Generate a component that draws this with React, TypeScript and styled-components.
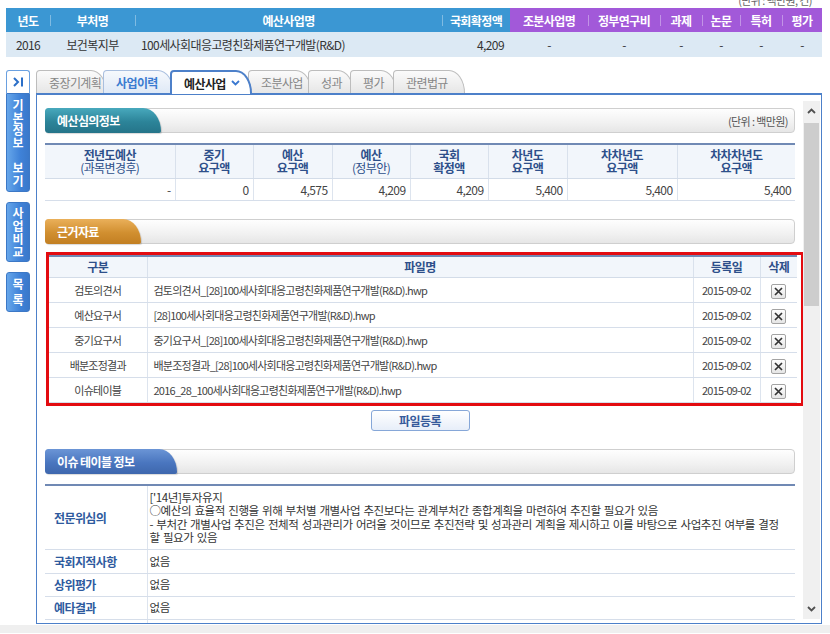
import React from 'react';
import styled, { createGlobalStyle, css } from 'styled-components';

const GlobalStyle = createGlobalStyle`
  html, body {
    margin: 0;
    padding: 0;
    background: #ffffff;
  }
  body {
    font-family: "Noto Sans CJK KR", "Noto Sans", sans-serif;
    font-size: 12px;
    color: #333;
  }
  * {
    box-sizing: border-box;
  }
  table {
    border-collapse: collapse;
    border-spacing: 0;
  }
`;

const Page = styled.div`
  width: 830px;
  height: 634px;
  overflow: hidden;
  padding: 0 8px 0 6px;
  letter-spacing: -0.6px;
`;

const UnitNote = styled.div`
  height: 8px;
  overflow: hidden;
  text-align: right;
  font-size: 11px;
  line-height: 14px;
  color: #666;
  padding-right: 10px;

  span {
    display: block;
    margin-top: -7px;
  }
`;

/* ---------- summary table ---------- */

const SummaryTable = styled.table`
  width: 816px;
  table-layout: fixed;
`;

const SumHead = styled.th<{ $purple?: boolean }>`
  position: relative;
  height: 24px;
  padding: 0;
  background: ${({ $purple }) => ($purple ? '#a259d9' : '#3b97d3')};
  color: #fff;
  font-weight: 700;
  font-size: 12px;
  text-align: center;

  & + &::before {
    content: '';
    position: absolute;
    left: 0;
    top: 7px;
    width: 1px;
    height: 11px;
    background: rgba(255, 255, 255, 0.35);
  }
`;

const SumCell = styled.td<{ $align?: string }>`
  height: 25px;
  padding: 0 6px;
  background: #dce9f4;
  color: #333;
  font-size: 12px;
  text-align: ${({ $align }) => $align || 'center'};
  white-space: nowrap;
`;

/* ---------- layout ---------- */

const Main = styled.div`
  display: flex;
  gap: 6px;
  margin-top: 13px;
`;

const Sidebar = styled.div`
  width: 24px;
  display: flex;
  flex-direction: column;
`;

const Toggle = styled.div`
  height: 23px;
  border: 1px solid #6aa0e0;
  border-bottom: none;
  border-radius: 3px 3px 0 0;
  background: #fff;
  display: flex;
  align-items: center;
  justify-content: center;
`;

const SideButton = styled.div<{ $h: number; $top?: number; $line?: number; $center?: boolean }>`
  height: ${({ $h }) => $h}px;
  margin-top: ${({ $top }) => $top ?? 0}px;
  border: 1px solid #3c78c6;
  border-radius: ${({ $top }) => ($top ? '3px' : '0 0 3px 3px')};
  background: linear-gradient(to right, #66a6ea, #3f82d8 60%, #3a78ca);
  color: #fff;
  font-weight: 700;
  font-size: 12px;
  display: flex;
  flex-direction: column;
  align-items: center;
  justify-content: ${({ $center }) => ($center ? 'center' : 'flex-start')};
  padding-top: ${({ $center }) => ($center ? 0 : 5)}px;
  line-height: ${({ $line }) => $line ?? 12.6}px;
  letter-spacing: 0;
`;

const Char = styled.span`
  display: block;
  min-height: 1em;
`;

const Content = styled.div`
  flex: 1;
  display: flex;
  flex-direction: column;
`;

const Tabs = styled.div`
  display: flex;
  align-items: flex-end;
  height: 23px;
  position: relative;
  z-index: 1;
`;

const Tab = styled.div<{ $w: number; $active?: boolean; $soft?: boolean }>`
  width: ${({ $w }) => $w}px;
  height: 23px;
  margin-right: -4px;
  border: 1px solid #bdbdbd;
  border-bottom: none;
  border-radius: 4px 16px 0 0 / 4px 23px 0 0;
  background: linear-gradient(#fbfbfb, #e6e6e6);
  color: #868686;
  font-size: 12px;
  display: flex;
  align-items: center;
  padding-left: 12px;
  gap: 5px;

  ${({ $soft }) =>
    $soft &&
    css`
      background: linear-gradient(#f6f9fd, #dfe9f6);
      border-color: #a9bfdf;
      color: #3a7bd0;
      font-weight: 700;
    `}

  ${({ $active }) =>
    $active &&
    css`
      height: 24px;
      margin-bottom: -1px;
      background: #fff;
      border: 2px solid #4d80c9;
      border-bottom: none;
      color: #222;
      font-weight: 700;
      position: relative;
      z-index: 2;
    `}
`;

const Panel = styled.div`
  height: 531px;
  border: 1px solid #4d80c9;
  border-top-width: 2px;
  display: flex;
  background: #fff;
`;

const Body = styled.div`
  flex: 1;
  overflow: hidden;
  padding: 13px 8px 0 8px;
`;

const Scrollbar = styled.div`
  width: 17px;
  margin: 6px 1px 4px 0;
  background: #f0f0f0;
  display: flex;
  flex-direction: column;
  align-items: center;
`;

const ScrollArrow = styled.div`
  height: 20px;
  display: flex;
  align-items: center;
  justify-content: center;
`;

const ScrollThumb = styled.div`
  width: 15px;
  height: 183px;
  margin-top: 2px;
  background: #cdcdcd;
`;

const ScrollTrack = styled.div`
  flex: 1;
`;

/* ---------- section header ---------- */

const tones = {
  teal: 'linear-gradient(#48a9bd, #2c8499 55%, #257489)',
  orange: 'linear-gradient(#eab05a, #d18f30 55%, #c27f22)',
  blue: 'linear-gradient(#6b95d6, #4a76bf 55%, #3e67ad)',
};

const SectionBar = styled.div<{ $top?: number }>`
  height: 25px;
  margin-top: ${({ $top }) => $top ?? 0}px;
  border: 1px solid #cfcfcf;
  border-radius: 4px;
  background: linear-gradient(#fefefe, #f1f1f1 60%, #e6e6e6);
  display: flex;
  align-items: stretch;
  justify-content: space-between;
`;

const SectionTab = styled.div<{ $tone: keyof typeof tones; $w: number }>`
  width: ${({ $w }) => $w}px;
  margin: -1px 0 -1px -1px;
  border-radius: 4px 20px 2px 4px / 4px 26px 2px 4px;
  background: ${({ $tone }) => tones[$tone]};
  color: #fff;
  font-weight: 700;
  font-size: 12px;
  display: flex;
  align-items: center;
  padding-left: 12px;
  box-shadow: 1px 1px 1px rgba(0, 0, 0, 0.15);
`;

const SectionUnit = styled.div`
  font-size: 11px;
  color: #555;
  display: flex;
  align-items: center;
  padding-right: 6px;
`;

/* ---------- data tables ---------- */

const DataTable = styled.table<{ $top?: number; $small?: boolean }>`
  width: 100%;
  table-layout: fixed;
  margin-top: ${({ $top }) => $top ?? 0}px;
  border-top: 2px solid #7089b4;

  td {
    font-size: ${({ $small }) => ($small ? '11px' : '12px')};
    letter-spacing: ${({ $small }) => ($small ? '-0.75px' : '-0.6px')};
  }
`;

const HeadCell = styled.th<{ $h?: number }>`
  height: ${({ $h }) => $h ?? 22}px;
  padding: 0;
  background: #f2f6fb;
  border-left: 1px solid #d9e1ec;
  border-bottom: 1px solid #d3dce8;
  color: #2d4f8a;
  font-weight: 700;
  font-size: 12px;
  line-height: 13px;
  text-align: center;

  &:first-child {
    border-left: none;
  }

  small {
    font-size: 12px;
    font-weight: 400;
  }
`;

const Cell = styled.td<{ $align?: string; $h?: number }>`
  height: ${({ $h }) => $h ?? 25}px;
  padding: 0 ${({ $align }) => ($align === 'left' ? '6px' : '4px')};
  border-left: 1px solid #dde4ee;
  border-bottom: 1px solid #d6deea;
  color: #444;
  text-align: ${({ $align }) => $align || 'center'};
  white-space: nowrap;
  overflow: hidden;

  &:first-child {
    border-left: none;
  }
`;

const RedBox = styled.div`
  margin: 8px -9px 0 1px;
  border: 3px solid #e30b10;
  padding-right: 4px;
`;

const DeleteBox = styled.span`
  display: inline-flex;
  width: 15px;
  height: 15px;
  border: 1px solid #a3a3a3;
  border-radius: 2px;
  background: linear-gradient(#ffffff, #e5e5e5);
  align-items: center;
  justify-content: center;
  vertical-align: middle;
`;

const RegisterButton = styled.div`
  width: 99px;
  height: 21px;
  margin: 4px auto 0;
  border: 1px solid #86a7d8;
  border-radius: 3px;
  background: linear-gradient(#ffffff, #e7eef9);
  color: #35599a;
  font-weight: 700;
  font-size: 12px;
  display: flex;
  align-items: center;
  justify-content: center;
`;

const IssueTable = styled.table`
  width: 100%;
  table-layout: fixed;
  margin-top: 10px;
  border-top: 2px solid #7089b4;
`;

const IssueLabel = styled.th<{ $h: number }>`
  height: ${({ $h }) => $h}px;
  padding: 0 0 0 9px;
  border-bottom: 1px solid #d6deea;
  color: #2e5a9e;
  font-weight: 700;
  font-size: 12px;
  text-align: left;
  vertical-align: middle;
`;

const IssueText = styled.td`
  padding: 4px 4px 3px 2px;
  border-left: 1px solid #dde4ee;
  border-bottom: 1px solid #d6deea;
  color: #333;
  font-size: 11.5px;
  line-height: 13.6px;
  letter-spacing: -0.38px;
  word-spacing: 1px;
`;

const BottomStrip = styled.div`
  height: 8px;
  margin: 1px -8px 0 -6px;
  background: #efefef;
`;

/* ---------- data ---------- */

const budgetHeads: [string, string, boolean][] = [
  ['전년도예산', '(과목변경후)', true],
  ['중기', '요구액', false],
  ['예산', '요구액', false],
  ['예산', '(정부안)', true],
  ['국회', '확정액', false],
  ['차년도', '요구액', false],
  ['차차년도', '요구액', false],
  ['차차차년도', '요구액', false],
];
const budgetWidths = [130, 78, 79, 78, 78, 79, 110, 118];
const budgetValues = ['-', '0', '4,575', '4,209', '4,209', '5,400', '5,400', '5,400'];

const files = [
  ['검토의견서', '검토의견서_[28]100세사회대응고령친화제품연구개발(R&D).hwp'],
  ['예산요구서', '[28]100세사회대응고령친화제품연구개발(R&D).hwp'],
  ['중기요구서', '중기요구서_[28]100세사회대응고령친화제품연구개발(R&D).hwp'],
  ['배분조정결과', '배분조정결과_[28]100세사회대응고령친화제품연구개발(R&D).hwp'],
  ['이슈테이블', '2016_28_100세사회대응고령친화제품연구개발(R&D).hwp'],
];

const issues: [string, string, number][] = [
  ['국회지적사항', '없음', 24],
  ['상위평가', '없음', 23],
  ['예타결과', '없음', 23],
  ['심층평가', '없음', 23],
];

const CloseIcon = () => (
  <svg width="9" height="9" viewBox="0 0 9 9">
    <path d="M1 1L8 8M8 1L1 8" stroke="#333" strokeWidth="1.7" />
  </svg>
);

const Chevron = ({ color, up }: { color: string; up?: boolean }) => (
  <svg width="9" height="6" viewBox="0 0 9 6">
    <path d={up ? 'M1 5L4.5 1.5L8 5' : 'M1 1L4.5 4.5L8 1'} stroke={color} strokeWidth="1.8" fill="none" />
  </svg>
);

const VLabel = ({ text }: { text: string }) => (
  <>
    {text.split('').map((c, i) => (
      <Char key={i}>{c === ' ' ? '\u00a0' : c}</Char>
    ))}
  </>
);

export default function App() {
  return (
    <Page>
      <GlobalStyle />
      <UnitNote>
        <span>(단위 : 백만원, 건)</span>
      </UnitNote>

      <SummaryTable>
        <colgroup>
          {[44, 85, 307, 68, 78, 72, 42, 38, 42, 40].map((w, i) => (
            <col key={i} style={{ width: w }} />
          ))}
        </colgroup>
        <thead>
          <tr>
            <SumHead>년도</SumHead>
            <SumHead>부처명</SumHead>
            <SumHead>예산사업명</SumHead>
            <SumHead>국회확정액</SumHead>
            <SumHead $purple>조분사업명</SumHead>
            <SumHead $purple>정부연구비</SumHead>
            <SumHead $purple>과제</SumHead>
            <SumHead $purple>논문</SumHead>
            <SumHead $purple>특허</SumHead>
            <SumHead $purple>평가</SumHead>
          </tr>
        </thead>
        <tbody>
          <tr>
            <SumCell>2016</SumCell>
            <SumCell>보건복지부</SumCell>
            <SumCell $align="left">100세사회대응고령친화제품연구개발(R&amp;D)</SumCell>
            <SumCell $align="right">4,209</SumCell>
            <SumCell>-</SumCell>
            <SumCell>-</SumCell>
            <SumCell>-</SumCell>
            <SumCell>-</SumCell>
            <SumCell>-</SumCell>
            <SumCell>-</SumCell>
          </tr>
        </tbody>
      </SummaryTable>

      <Main>
        <Sidebar>
          <Toggle>
            <svg width="11" height="10" viewBox="0 0 11 10">
              <path d="M1 1L5 5L1 9" stroke="#2b6fc8" strokeWidth="2" fill="none" />
              <path d="M9 0.5V9.5" stroke="#2b6fc8" strokeWidth="2" />
            </svg>
          </Toggle>
          <SideButton $h={99}>
            <VLabel text="기본정보 보기" />
          </SideButton>
          <SideButton $h={60} $top={10} $line={13} $center>
            <VLabel text="사업비교" />
          </SideButton>
          <SideButton $h={40} $top={10} $line={16} $center>
            <VLabel text="목록" />
          </SideButton>
        </Sidebar>

        <Content>
          <Tabs>
            <Tab $w={71}>중장기계획</Tab>
            <Tab $w={71} $soft>사업이력</Tab>
            <Tab $w={82} $active>
              예산사업 <Chevron color="#3a78d0" />
            </Tab>
            <Tab $w={64}>조분사업</Tab>
            <Tab $w={46}>성과</Tab>
            <Tab $w={47}>평가</Tab>
            <Tab $w={72}>관련법규</Tab>
          </Tabs>

          <Panel>
            <Body>
              <SectionBar>
                <SectionTab $tone="teal" $w={116}>예산심의정보</SectionTab>
                <SectionUnit>(단위 : 백만원)</SectionUnit>
              </SectionBar>

              <DataTable $top={10}>
                <colgroup>
                  {budgetWidths.map((w, i) => (
                    <col key={i} style={{ width: w }} />
                  ))}
                </colgroup>
                <thead>
                  <tr>
                    {budgetHeads.map(([a, b, light], i) => (
                      <HeadCell key={i} $h={34}>
                        {a}
                        <br />
                        {light ? <small>{b}</small> : b}
                      </HeadCell>
                    ))}
                  </tr>
                </thead>
                <tbody>
                  <tr>
                    {budgetValues.map((v, i) => (
                      <Cell key={i} $align="right" $h={22}>
                        {v}
                      </Cell>
                    ))}
                  </tr>
                </tbody>
              </DataTable>

              <SectionBar $top={18}>
                <SectionTab $tone="orange" $w={96}>근거자료</SectionTab>
              </SectionBar>

              <RedBox>
                <DataTable $small>
                  <colgroup>
                    <col style={{ width: 98 }} />
                    <col />
                    <col style={{ width: 67 }} />
                    <col style={{ width: 37 }} />
                  </colgroup>
                  <thead>
                    <tr>
                      <HeadCell>구분</HeadCell>
                      <HeadCell>파일명</HeadCell>
                      <HeadCell>등록일</HeadCell>
                      <HeadCell>삭제</HeadCell>
                    </tr>
                  </thead>
                  <tbody>
                    {files.map(([kind, name]) => (
                      <tr key={kind}>
                        <Cell>{kind}</Cell>
                        <Cell $align="left">{name}</Cell>
                        <Cell>2015-09-02</Cell>
                        <Cell>
                          <DeleteBox>
                            <CloseIcon />
                          </DeleteBox>
                        </Cell>
                      </tr>
                    ))}
                  </tbody>
                </DataTable>
              </RedBox>

              <RegisterButton>파일등록</RegisterButton>

              <SectionBar $top={18}>
                <SectionTab $tone="blue" $w={132}>이슈 테이블 정보</SectionTab>
              </SectionBar>

              <IssueTable>
                <colgroup>
                  <col style={{ width: 102 }} />
                  <col />
                </colgroup>
                <tbody>
                  <tr>
                    <IssueLabel $h={64}>전문위심의</IssueLabel>
                    <IssueText>
                      ['14년]투자유지
                      <br />
                      ○예산의 효율적 진행을 위해 부처별 개별사업 추진보다는 관계부처간 종합계획을 마련하여 추진할 필요가 있음
                      <br />- 부처간 개별사업 추진은 전체적 성과관리가 어려울 것이므로 추진전략 및 성과관리 계획을 제시하고 이를 바탕으로 사업추진 여부를 결정
                      <br />할 필요가 있음
                    </IssueText>
                  </tr>
                  {issues.map(([label, text, h]) => (
                    <tr key={label}>
                      <IssueLabel $h={h}>{label}</IssueLabel>
                      <IssueText>{text}</IssueText>
                    </tr>
                  ))}
                </tbody>
              </IssueTable>
            </Body>

            <Scrollbar>
              <ScrollArrow>
                <Chevron color="#505050" up />
              </ScrollArrow>
              <ScrollThumb />
              <ScrollTrack />
              <ScrollArrow>
                <Chevron color="#505050" />
              </ScrollArrow>
            </Scrollbar>
          </Panel>
        </Content>
      </Main>
      <BottomStrip />
    </Page>
  );
}
